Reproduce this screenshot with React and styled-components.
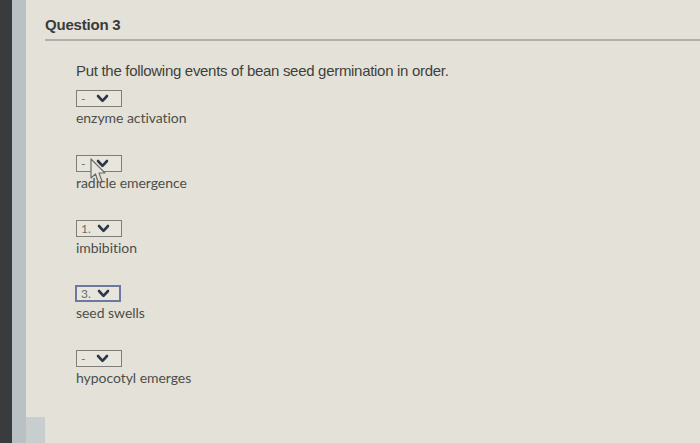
import React from "react";
import styled, { createGlobalStyle } from "styled-components";

const GlobalStyle = createGlobalStyle`
  html, body {
    margin: 0;
    padding: 0;
    background: #e4e2d8;
  }
  body {
    font-family: "Liberation Sans", Arial, sans-serif;
  }
`;

const Page = styled.div`
  display: flex;
  width: 700px;
  height: 443px;
  overflow: hidden;
  background: #e4e2d8;
`;

const DarkEdge = styled.div`
  width: 12px;
  flex-shrink: 0;
  background: #3a3b3d;
`;

const Rail = styled.div`
  width: 14px;
  flex-shrink: 0;
  background: #b9c1c4;
  display: flex;
  flex-direction: column;
  justify-content: flex-end;
`;

const RailFoot = styled.div`
  height: 26px;
  margin-left: 14px;
  margin-right: -19px;
  background: #c8cdcd;
`;

const Main = styled.div`
  flex: 1;
  padding: 16px 0 0 19px;
`;

const Header = styled.div`
  border-bottom: 2px solid #aeb0ae;
  padding-bottom: 6px;
`;

const Title = styled.h2`
  margin: 0;
  font-size: 15px;
  line-height: 17px;
  font-weight: bold;
  color: #3a3a38;
  letter-spacing: -0.2px;
`;

const Body = styled.div`
  padding: 21px 0 0 31px;
`;

const Prompt = styled.p`
  margin: 0 0 11px;
  font-size: 15px;
  line-height: 17px;
  color: #3f3f3d;
  letter-spacing: -0.3px;
`;

const List = styled.div`
  display: flex;
  flex-direction: column;
  gap: 29px;
`;

const Item = styled.div`
  position: relative;
  display: flex;
  flex-direction: column;
  align-items: flex-start;
`;

const Select = styled.div`
  display: flex;
  align-items: center;
  gap: ${(p) => (p.$wide ? 6 : 11)}px;
  width: ${(p) => (p.$focused ? 38 : 40)}px;
  height: ${(p) => (p.$focused ? 13 : 15)}px;
  padding: 0 0 0 4px;
  margin-left: ${(p) => (p.$focused ? -1 : 0)}px;
  border: ${(p) => (p.$focused ? "2px solid #6b79a0" : "1px solid #7d7e7a")};
  background: #e7e5dc;
  font-family: "Lato", sans-serif;
  font-size: 12px;
  color: #6c6d6a;
`;

const Chevron = styled.svg`
  width: 13px;
  height: 9px;
`;

const Label = styled.span`
  margin-top: 3px;
  font-family: "Lato", sans-serif;
  font-size: 14px;
  line-height: 16px;
  color: #4d4e4b;
  letter-spacing: -0.05px;
`;

const Cursor = styled.svg`
  position: absolute;
  left: 14px;
  top: 3px;
  width: 17px;
  height: 28px;
`;

const items = [
  { value: "-", label: "enzyme activation" },
  { value: "-", label: "radicle emergence", cursor: true },
  { value: "1.", label: "imbibition" },
  { value: "3.", label: "seed swells", focused: true },
  { value: "-", label: "hypocotyl emerges" },
];

export default function App() {
  return (
    <Page>
      <GlobalStyle />
      <DarkEdge />
      <Rail>
        <RailFoot />
      </Rail>
      <Main>
        <Header>
          <Title>Question 3</Title>
        </Header>
        <Body>
          <Prompt>Put the following events of bean seed germination in order.</Prompt>
          <List>
            {items.map((it, i) => (
              <Item key={i}>
                <Select $focused={it.focused} $wide={it.value.length > 1}>
                  <span>{it.value}</span>
                  <Chevron viewBox="0 0 13 9">
                    <path
                      d="M2 2 L6.5 6.8 L11 2"
                      fill="none"
                      stroke="#2c3748"
                      strokeWidth="2.6"
                      strokeLinecap="round"
                      strokeLinejoin="round"
                    />
                  </Chevron>
                </Select>
                <Label>{it.label}</Label>
                {it.cursor && (
                  <Cursor viewBox="0 0 17 28">
                    <path
                      d="M1 1 L1 20 L5.5 16 L8.5 24.5 L12 23.2 L9 15 L15 15 Z"
                      fill="#e6e4db"
                      stroke="#6b6c69"
                      strokeWidth="1.2"
                      strokeLinejoin="round"
                    />
                  </Cursor>
                )}
              </Item>
            ))}
          </List>
        </Body>
      </Main>
    </Page>
  );
}
